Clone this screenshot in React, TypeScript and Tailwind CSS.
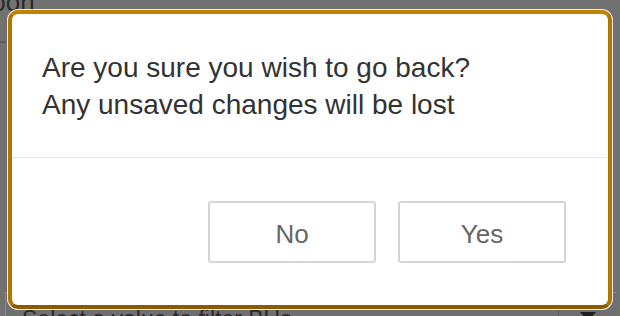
export default function App() {
  return (
    <div className="relative h-[316px] w-[620px] overflow-hidden bg-[#717171] font-['Liberation_Sans',Arial,sans-serif]">
      {/* page behind the backdrop */}
      <div className="flex h-full flex-col">
        <div className="-mt-[11px] -ml-[52px] h-[26px] overflow-hidden">
          <span className="block text-[26px] leading-[26px] text-[#2a2a2a]">Balloon</span>
        </div>
        <div className="mt-[26px] h-[2px] w-[6px] bg-[#5e5e5e]" />
        <div className="mt-auto ml-[5px] mr-[4px] flex h-[24px] items-start overflow-hidden border-l border-t border-[#8a8a8a] bg-[#6f6f6f]">
          <div className="flex-1 pl-[16px] pt-[15px] text-[23px] leading-[23px] whitespace-nowrap text-[#2a2a2a]">
            Select a value to filter BUs
          </div>
          <div className="flex h-full w-[58px] justify-center border-l border-[#5e5e5e] pt-[19px]">
            <span className="h-0 w-0 border-x-[8px] border-t-[9px] border-x-transparent border-t-[#1e1e1e]" />
          </div>
        </div>
      </div>

      {/* confirm dialog */}
      <div className="absolute left-[8px] top-[10px] flex h-[299px] w-[604px] flex-col rounded-[10px] border-[4px] border-t-[#c08300] border-x-[#b07600] border-b-[#8a5b00] bg-white shadow-[0_0_0_1px_rgba(255,255,255,0.85)]">
        <div className="px-[30px] pt-[35px] pb-[34px] text-[28px] leading-[37px] text-[#333333]">
          <p>Are you sure you wish to go back?</p>
          <p>Any unsaved changes will be lost</p>
        </div>
        <div className="h-px bg-[#e5e5e5]" />
        <div className="flex justify-end gap-[22px] pt-[43px] pr-[42px] pb-[42px]">
          <button className="h-[62px] w-[168px] rounded-[3px] border-2 border-[#d4d4d4] bg-white pt-[4px] text-[26px] text-[#666666]">
            No
          </button>
          <button className="h-[62px] w-[168px] rounded-[3px] border-2 border-[#d4d4d4] bg-white pt-[4px] text-[26px] text-[#666666]">
            Yes
          </button>
        </div>
      </div>
    </div>
  );
}
